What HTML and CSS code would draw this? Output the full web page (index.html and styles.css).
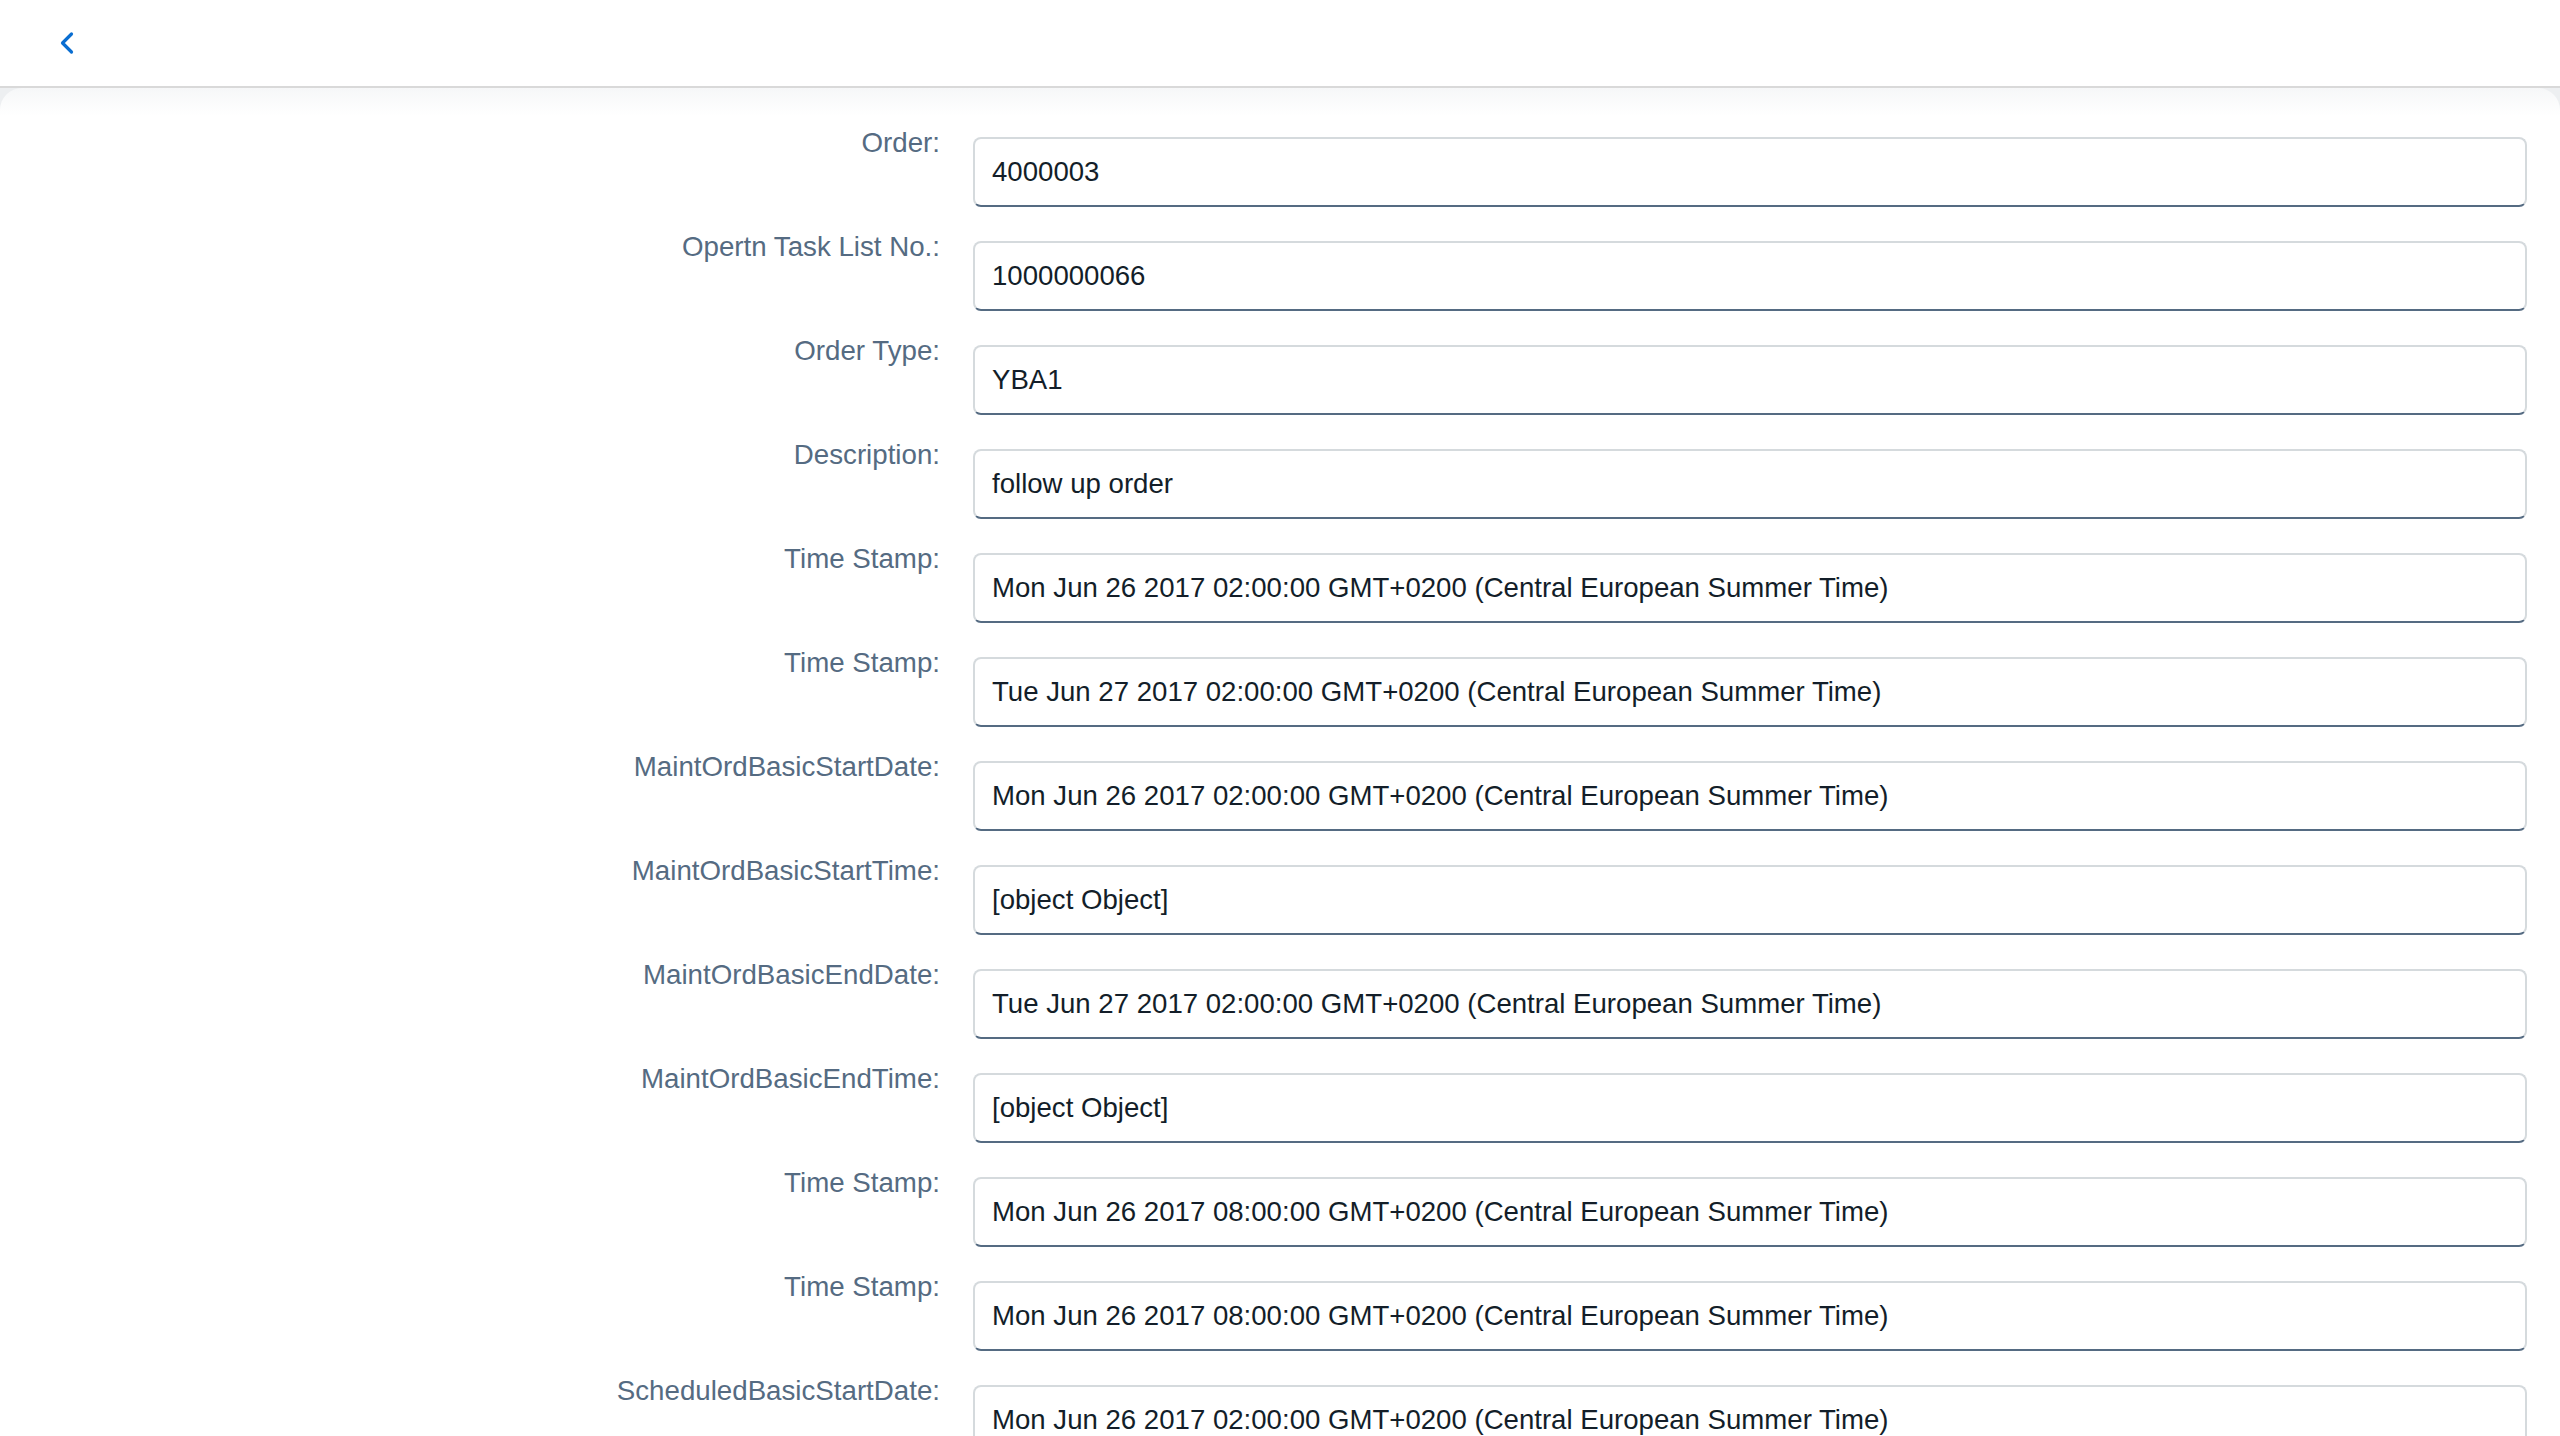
FILE: index.html
```html
<!DOCTYPE html>
<html lang="en">
<head>
<meta charset="utf-8">
<title>Order</title>
<link rel="stylesheet" href="styles.css">
</head>
<body>
<header class="shell-bar">
  <button class="back-btn" aria-label="Back">
    <svg width="16" height="24" viewBox="0 0 16 24"><path d="M12.5 3 L3.5 12 L12.5 21" fill="none" stroke="#0a6ed1" stroke-width="3.2" stroke-linecap="round" stroke-linejoin="round"/></svg>
  </button>
</header>
<main class="page">
  <section class="card">
    <div class="form">
      <div class="row"><label class="label">Order:</label><div class="field">4000003</div></div>
      <div class="row"><label class="label">Opertn Task List No.:</label><div class="field">1000000066</div></div>
      <div class="row"><label class="label">Order Type:</label><div class="field">YBA1</div></div>
      <div class="row"><label class="label">Description:</label><div class="field">follow up order</div></div>
      <div class="row"><label class="label">Time Stamp:</label><div class="field">Mon Jun 26 2017 02:00:00 GMT+0200 (Central European Summer Time)</div></div>
      <div class="row"><label class="label">Time Stamp:</label><div class="field">Tue Jun 27 2017 02:00:00 GMT+0200 (Central European Summer Time)</div></div>
      <div class="row"><label class="label">MaintOrdBasicStartDate:</label><div class="field">Mon Jun 26 2017 02:00:00 GMT+0200 (Central European Summer Time)</div></div>
      <div class="row"><label class="label">MaintOrdBasicStartTime:</label><div class="field">[object Object]</div></div>
      <div class="row"><label class="label">MaintOrdBasicEndDate:</label><div class="field">Tue Jun 27 2017 02:00:00 GMT+0200 (Central European Summer Time)</div></div>
      <div class="row"><label class="label">MaintOrdBasicEndTime:</label><div class="field">[object Object]</div></div>
      <div class="row"><label class="label">Time Stamp:</label><div class="field">Mon Jun 26 2017 08:00:00 GMT+0200 (Central European Summer Time)</div></div>
      <div class="row"><label class="label">Time Stamp:</label><div class="field">Mon Jun 26 2017 08:00:00 GMT+0200 (Central European Summer Time)</div></div>
      <div class="row"><label class="label">ScheduledBasicStartDate:</label><div class="field">Mon Jun 26 2017 02:00:00 GMT+0200 (Central European Summer Time)</div></div>
    </div>
  </section>
</main>
</body>
</html>
```
FILE: styles.css
```css
html, body {
  margin: 0;
  padding: 0;
}
body {
  background: #edeff1;
  font-family: "Liberation Sans", Arial, sans-serif;
  overflow: hidden;
  height: 1436px;
}
.shell-bar {
  height: 86px;
  background: #ffffff;
  border-bottom: 2px solid #d9d9d9;
  display: flex;
  align-items: center;
  padding-left: 59px;
}
.back-btn {
  border: 0;
  background: transparent;
  padding: 0;
  width: 16px;
  height: 24px;
  display: flex;
  align-items: center;
  justify-content: center;
  cursor: pointer;
}
.page {
  background: #edeff1;
}
.card {
  background: linear-gradient(#f6f7f8 0, #ffffff 28px);
  border-radius: 22px 22px 0 0;
  min-height: 1400px;
}
.form {
  display: flex;
  flex-direction: column;
  gap: 23px;
  padding: 38px 33px 0 0;
}
.row {
  display: flex;
  align-items: flex-start;
  gap: 33px;
}
.label {
  width: 940px;
  flex: none;
  text-align: right;
  font-size: 27.7px;
  line-height: 34px;
  color: #556b82;
}
.field {
  flex: 1;
  margin-top: 11px;
  height: 70px;
  box-sizing: border-box;
  border: 2px solid #d5dadd;
  border-bottom-color: #556b82;
  border-radius: 8px;
  background: #ffffff;
  padding: 0 17px;
  display: flex;
  align-items: center;
  font-size: 27.6px;
  color: #131e29;
  white-space: nowrap;
}
```
